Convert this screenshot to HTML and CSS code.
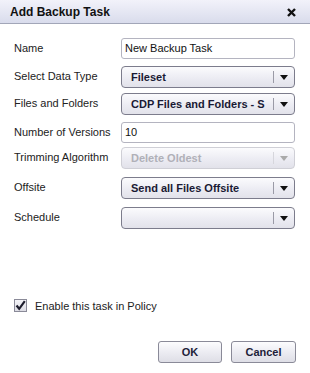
FILE: index.html
```html
<!DOCTYPE html>
<html lang="en">
<head>
  <meta charset="UTF-8" />
  <title>Add Backup Task</title>
  <link rel="stylesheet" href="styles.css">
</head>
<body>

<div class="dialog">
  <div class="titlebar">
    <span class="title">Add Backup Task</span>
    <svg class="close" width="9" height="9" viewBox="0 0 9 9"><path d="M1 1 L8 8 M8 1 L1 8" stroke="#111" stroke-width="2.4"/></svg>
  </div>

  <div class="fields">
    <label class="lbl">Name</label>
    <div class="input">New Backup Task</div>

    <label class="lbl">Select Data Type</label>
    <div class="select"><span class="val">Fileset</span><span class="arrow"></span></div>

    <label class="lbl">Files and Folders</label>
    <div class="select"><span class="val">CDP Files and Folders - S</span><span class="arrow"></span></div>

    <label class="lbl">Number of Versions</label>
    <div class="input">10</div>

    <label class="lbl">Trimming Algorithm</label>
    <div class="select disabled"><span class="val">Delete Oldest</span><span class="arrow"></span></div>

    <label class="lbl">Offsite</label>
    <div class="select"><span class="val">Send all Files Offsite</span><span class="arrow"></span></div>

    <label class="lbl">Schedule</label>
    <div class="select"><span class="val"></span><span class="arrow"></span></div>
  </div>

  <div class="check-row">
    <span class="checkbox">
      <svg width="11" height="11" viewBox="0 0 11 11"><path d="M1.5 5.5 L4.2 8.8 L9.8 1.2" fill="none" stroke="#1c1c2c" stroke-width="2.2"/></svg>
    </span>
    <span>Enable this task in Policy</span>
  </div>

  <div class="buttons">
    <button class="btn ok">OK</button>
    <button class="btn cancel">Cancel</button>
  </div>
</div>

</body>
</html>
```

FILE: styles.css
```css
body { margin: 0; padding: 0; background: #fff; font-family: "Liberation Sans", Arial, sans-serif; font-size: 11px; color: #222; }
.dialog { width: 310px; height: 373px; display: flex; flex-direction: column; box-sizing: border-box; }

.titlebar { height: 24px; display: flex; align-items: center; justify-content: space-between; padding: 0 14px 0 10px; background: linear-gradient(#f2f2fa, #d9dcec); border-bottom: 1px solid #a2a6b8; box-sizing: border-box; }
.title { font-size: 12px; font-weight: bold; color: #111; }
.close { margin-top: 1px; }

.fields { display: grid; grid-template-columns: 107px 174px; grid-template-rows: 28px 27px 29px 25px 30px 30px 21px; padding: 14px 0 0 14px; }
.lbl { line-height: 21px; color: #222; }

.input { height: 21px; box-sizing: border-box; border: 1px solid #b4b4c0; border-radius: 3px; padding: 0 3px; line-height: 19px; background: #fff; color: #111; }

.select { height: 22px; box-sizing: border-box; border: 1px solid #7c7c8c; border-radius: 4px; background: linear-gradient(#fbfbfd, #ececf3 55%, #e2e2ea); display: flex; align-items: center; overflow: hidden; }
.select .val { flex: 1; padding-left: 9px; font-weight: bold; color: #1a1a34; white-space: nowrap; overflow: hidden; }
.select .arrow { width: 20px; height: 12px; border-left: 1px solid #9a9aa6; position: relative; flex: none; }
.select .arrow::after { content: ""; position: absolute; left: 6px; top: 4px; border-left: 4px solid transparent; border-right: 4px solid transparent; border-top: 5px solid #111; }
.select.disabled { border-color: #cfcfd6; }
.select.disabled .val { color: #b0b0b8; }
.select.disabled .arrow { border-left-color: #d6d6dc; }
.select.disabled .arrow::after { border-top-color: #aaa; }

.check-row { margin-top: auto; display: flex; align-items: center; gap: 8px; padding-left: 14px; color: #222; }
.checkbox { width: 13px; height: 13px; box-sizing: border-box; border: 1px solid #8a8a98; background: linear-gradient(#f4f4f8, #dcdce4); display: flex; align-items: center; justify-content: center; }

.buttons { display: flex; justify-content: flex-end; gap: 9px; padding: 29px 14px 10px 0; }
.btn { height: 22px; box-sizing: border-box; border: 1px solid #8a8a98; border-radius: 3px; background: linear-gradient(#fcfcfe, #ebebf1 55%, #dedee6); font-family: "Liberation Sans", Arial, sans-serif; font-size: 11px; font-weight: bold; color: #1e1e3a; padding: 0; }
.ok { width: 64px; }
.cancel { width: 65px; }
```
